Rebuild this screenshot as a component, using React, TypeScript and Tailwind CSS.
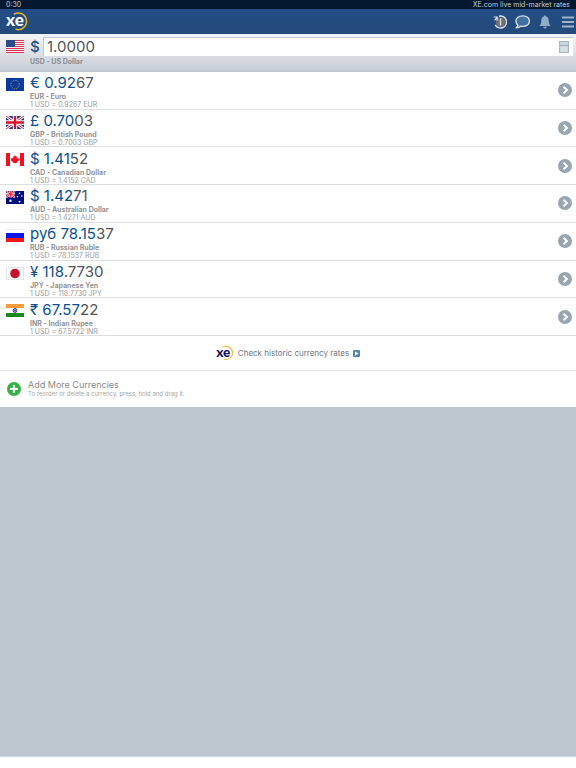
import { useState } from "react";
import type { ReactNode } from "react";

const US = (
  <>
    <rect width="18" height="13" fill="#f4eef2" />
    <path d="M0 .5h18M0 2.5h18M0 4.5h18M0 6.5h18M0 8.5h18M0 10.5h18M0 12.5h18" stroke="#dc3558" />
    <rect width="9" height="7" fill="#2f4a8a" />
  </>
);

const EU = (
  <>
    <rect width="18" height="13" fill="#0a3a9c" />
    <circle cx="9" cy="6.5" r="4.2" fill="none" stroke="#b9ac4a" strokeWidth="1" strokeDasharray="1 1.2" />
  </>
);

const GB = (
  <>
    <rect width="18" height="13" fill="#1b3688" />
    <path d="M0 0l18 13M18 0L0 13" stroke="#fff" strokeWidth="2.8" />
    <path d="M0 0l18 13M18 0L0 13" stroke="#d8213c" strokeWidth="1" />
    <path d="M9 0v13M0 6.5h18" stroke="#fff" strokeWidth="4.4" />
    <path d="M9 0v13M0 6.5h18" stroke="#d8102c" strokeWidth="2.4" />
  </>
);

const CA = (
  <>
    <rect width="18" height="13" fill="#fff" />
    <path d="M0 0h4v13H0zM14 0h4v13h-4z" fill="#f01020" />
    <path
      d="M9 2l1 1.8 1-.5-.3 2.4 1.2-1 .4.8 1.2-.2-.6 1.6.4.4-2.6 2 .2.8-1.7-.2v1.4h-.4V9.9l-1.7.2.2-.8-2.6-2 .4-.4-.6-1.6 1.2.2.4-.8 1.2 1L7 3.3l1 .5z"
      fill="#f01020"
    />
  </>
);

const AU = (
  <>
    <rect width="18" height="13" fill="#00107c" />
    <path d="M0 0l9 6.5M9 0L0 6.5" stroke="#fff" strokeWidth="1.6" />
    <path d="M4.5 0v6.5M0 3.2h9" stroke="#fff" strokeWidth="2.2" />
    <path d="M4.5 0v6.5M0 3.2h9M0 0l9 6.5M9 0L0 6.5" stroke="#e02038" strokeWidth=".9" />
    <g fill="#fff">
      <circle cx="4.5" cy="9.8" r="1.2" />
      <circle cx="13.5" cy="2.3" r=".8" />
      <circle cx="11.5" cy="5.6" r=".8" />
      <circle cx="15.8" cy="5" r=".8" />
      <circle cx="13.6" cy="10.6" r=".9" />
    </g>
  </>
);

const RU = (
  <>
    <rect width="18" height="13" fill="#fff" />
    <path d="M0 4h18v5H0z" fill="#0a18e8" />
    <path d="M0 9h18v4H0z" fill="#f01818" />
    <path d="M0 4V.3h18V4" fill="none" stroke="#e2e4e6" strokeWidth=".6" />
  </>
);

const JP = (
  <>
    <rect x=".5" y=".5" width="17" height="12" fill="#fff" stroke="#e2e4e6" />
    <circle cx="9" cy="6.5" r="4.8" fill="#c8102c" />
  </>
);

const IN = (
  <>
    <rect width="18" height="13" fill="#fff" />
    <path d="M0 0h18v4H0z" fill="#fa9a3c" />
    <path d="M0 9h18v4H0z" fill="#168a1c" />
    <circle cx="9" cy="6.5" r="2" fill="#9a9acc" stroke="#2c2c88" strokeWidth=".8" />
    <circle cx="9" cy="6.5" r=".7" fill="#2c2c88" />
  </>
);

const currencies = [
  { code: "EUR", name: "Euro", symbol: "€", major: "0.92", minor: "67", flag: EU },
  { code: "GBP", name: "British Pound", symbol: "£", major: "0.70", minor: "03", flag: GB },
  { code: "CAD", name: "Canadian Dollar", symbol: "$", major: "1.41", minor: "52", flag: CA },
  { code: "AUD", name: "Australian Dollar", symbol: "$", major: "1.42", minor: "71", flag: AU },
  { code: "RUB", name: "Russian Ruble", symbol: "руб", major: "78.15", minor: "37", flag: RU },
  { code: "JPY", name: "Japanese Yen", symbol: "¥", major: "118", minor: ".7730", flag: JP },
  { code: "INR", name: "Indian Rupee", symbol: "₹", major: "67.57", minor: "22", flag: IN },
];

function Flag({ children }: { children: ReactNode }) {
  return (
    <svg viewBox="0 0 18 13" className="h-[13px] w-[18px] shrink-0" aria-hidden="true">
      {children}
    </svg>
  );
}

function Logo({ className, arc }: { className: string; arc: string }) {
  return (
    <svg viewBox="0 0 22 25" className={className} role="img" aria-label="xe">
      <path d="M8.3 5A8.300 8.300 0 1 1 10 20.300" fill="none" stroke={arc} strokeWidth="1.500" strokeLinecap="round" />
      <text x="0" y="17" fontSize="17" fontWeight="900" fontFamily="Lato, sans-serif" fill="currentColor">
        xe
      </text>
    </svg>
  );
}

export default function App() {
  const [amount, setAmount] = useState("1.0000");

  return (
    <div className="flex min-h-screen flex-col bg-white pb-[11px] font-['Inter','Noto_Sans',sans-serif]">
      <div className="flex h-[9px] items-center justify-between bg-[#03182f] px-1.5 text-[7px] leading-[9px] text-[#c3cad2]">
        <span>0:30</span>
        <span>XE.com live mid-market rates</span>
      </div>

      <header className="flex h-[25px] items-center justify-between bg-linear-to-b from-[#234d87] to-[#234a78] pr-[2px] pl-1.5">
        <Logo className="h-[25px] w-[22px] text-white" arc="#e6b42c" />
        <div className="flex items-center gap-2">
          <button aria-label="Refresh rates">
            <svg viewBox="0 0 14 14" className="h-3.5 w-3.5">
              <circle cx="7.5" cy="7" r="4.8" fill="#716f70" />
              <path d="M6 1.200A6 6 0 1 1 2.200 9.800" fill="none" stroke="#dbe1e8" strokeWidth="1.400" />
              <path d="M.8 2h3.400v3.400M4.200 2.200L1.600 5.400" fill="none" stroke="#dbe1e8" strokeWidth="1.200" />
              <path d="M7.500 3.500v7" stroke="#d5d7da" strokeWidth="1.500" />
            </svg>
          </button>
          <button aria-label="Messages">
            <svg viewBox="0 0 15 14" className="h-3.5 w-[15px]">
              <path
                d="M7.800.8C3.800.8.9 3.100.9 6.100c0 1.700.8 3.100 2.100 4 0 1.200-.8 2-1.900 2.700 1.900.1 3.500-.5 4.500-1.600.7.200 1.400.200 2.200.200 3.900 0 6.600-2.300 6.600-5.300S11.700.8 7.800.8z"
                fill="#42719f"
                stroke="#d6e0e9"
                strokeWidth="1.300"
                strokeLinejoin="round"
              />
            </svg>
          </button>
          <button aria-label="Alerts">
            <svg viewBox="0 0 14 14" className="h-3.5 w-3.5" fill="#8fadc6">
              <path d="M7 .5c.7 0 1.100.5 1.100 1.100C10 2.200 10.700 3.700 10.700 5.500c0 3 .7 4 2.100 5.500H1.200c1.400-1.500 2.100-2.500 2.100-5.500 0-1.800.7-3.300 2.600-3.900C5.900 1 6.300.5 7 .5z" />
              <path d="M5.300 11.700h3.400a1.700 1.700 0 0 1-3.400 0z" />
            </svg>
          </button>
          <button aria-label="Menu">
            <svg viewBox="0 0 12 12" className="ml-0.5 h-3 w-3">
              <path d="M0 1.500h12M0 6h12M0 10.500h12" stroke="#9db6cc" strokeWidth="2" />
            </svg>
          </button>
        </div>
      </header>

      <section className="h-[38px] border-b-2 border-[#c3ccd6] bg-linear-to-b from-[#f0f1f3] from-10% to-[#c9ced6] pt-[3px]">
        <div className="flex items-center pr-[3px] pl-1.5">
          <Flag>{US}</Flag>
          <label htmlFor="amount" className="w-[19px] pl-1.5 text-[15px] leading-[19px] font-medium text-[#1c5288]">
            $
          </label>
          <div className="flex h-[19px] flex-1 items-center border-t border-l border-[#c3cad3] bg-white pr-1">
            <input
              id="amount"
              value={amount}
              onChange={(e) => setAmount(e.target.value)}
              className="min-w-0 flex-1 pl-[3px] text-[15px] leading-[18px] text-[#505458] outline-none"
            />
            <button aria-label="Calculator">
              <svg viewBox="0 0 10 12" className="h-3 w-2.5">
                <rect x=".5" y=".5" width="9" height="11" fill="#cdd7df" stroke="#a9b8c4" />
                <path d="M1 4.500h8" stroke="#9dafbd" />
                <path d="M1 7h8M1 9.300h8M3.700 5v6M6.400 5v6" stroke="#e3e9ee" strokeWidth=".5" />
              </svg>
            </button>
          </div>
        </div>
        <p className="pl-[30px] text-[7px] leading-[11px] font-bold text-[#8b9096]">USD - US Dollar</p>
      </section>

      <ul className="grid min-h-[264px] auto-rows-fr">
        {currencies.map((c) => (
          <li key={c.code} className="flex items-center border-b border-[#dcdfe2] pr-1 pl-1.5">
            <div className="self-start pt-1.5">
              <Flag>{c.flag}</Flag>
            </div>
            <div className="flex-1 pt-px pl-1.5">
              <p className="text-[15px] leading-[19px] text-[#505458]">
                <span className="text-[#0b4f8c]">
                  {c.symbol} {c.major}
                </span>
                {c.minor}
              </p>
              <p className="text-[7px] leading-[9px] font-bold text-[#929394]">
                {c.code} - {c.name}
              </p>
              <p className="text-[7px] leading-[7px] text-[#999b9d]">
                1 USD = {c.major}
                {c.minor} {c.code}
              </p>
            </div>
            <button aria-label={`${c.name} details`}>
              <svg viewBox="0 0 14 14" className="h-3.5 w-3.5">
                <circle cx="7" cy="7" r="7" fill="#98a6b0" />
                <path d="M5.500 3.700L9 7l-3.500 3.300" fill="none" stroke="#fff" strokeWidth="2" />
              </svg>
            </button>
          </li>
        ))}
      </ul>

      <a
        href="#history"
        className="flex h-[35px] items-center justify-center border-b border-[#dcdfe2] text-[8px] text-[#6b7681]"
      >
        <Logo className="h-5 w-[18px] text-[#14145c]" arc="#f3c04a" />
        <span className="px-1">Check historic currency rates</span>
        <svg viewBox="0 0 7 7" className="h-[7px] w-[7px]" aria-hidden="true">
          <rect width="7" height="7" rx="1" fill="#5786ad" />
          <path d="M2 1.500l3.500 2L2 5.500z" fill="#fff" />
        </svg>
      </a>

      <button className="flex h-9 items-center pl-[7px] text-left">
        <svg viewBox="0 0 14 14" className="h-3.5 w-3.5" aria-hidden="true">
          <circle cx="7" cy="7" r="7" fill="#35b244" />
          <path d="M7 3v8M3 7h8" stroke="#fff" strokeWidth="2.200" />
        </svg>
        <span className="pl-[7px]">
          <span className="block text-[9px] leading-[10px] text-[#87898b]">Add More Currencies</span>
          <span className="block text-[6px] leading-[8px] text-[#a3a5a7]">
            To reorder or delete a currency, press, hold and drag it.
          </span>
        </span>
      </button>

      <div className="flex-1 border-b border-[#cfd6dc] bg-[#bdc7d0]" />
    </div>
  );
}
